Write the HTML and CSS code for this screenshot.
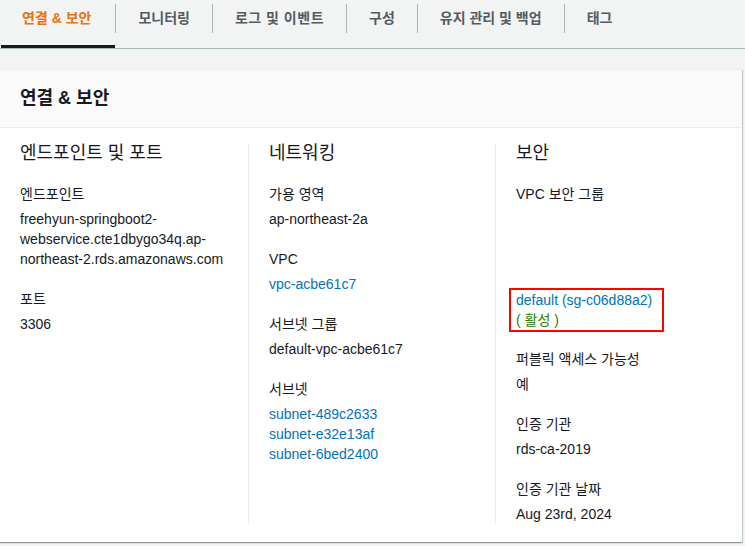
FILE: index.html
```html
<!DOCTYPE html>
<html lang="ko">
<head>
<meta charset="utf-8">
<link rel="stylesheet" href="styles.css">
</head>
<body>
<nav class="tabs">
  <div class="tab active">연결 &amp; 보안</div>
  <div class="sep"></div>
  <div class="tab">모니터링</div>
  <div class="sep"></div>
  <div class="tab wide">로그 및 이벤트</div>
  <div class="sep"></div>
  <div class="tab">구성</div>
  <div class="sep"></div>
  <div class="tab">유지 관리 및 백업</div>
  <div class="sep"></div>
  <div class="tab">태그</div>
</nav>
<section class="card">
  <header class="card-header">연결 &amp; 보안</header>
  <div class="card-body">
    <div class="col">
      <h3 class="col-title">엔드포인트 및 포트</h3>
      <div class="item">
        <div class="label">엔드포인트</div>
        <div class="value">freehyun-springboot2-<br>webservice.cte1dbygo34q.ap-<br>northeast-2.rds.amazonaws.com</div>
      </div>
      <div class="item">
        <div class="label">포트</div>
        <div class="value">3306</div>
      </div>
    </div>
    <div class="col divided">
      <h3 class="col-title">네트워킹</h3>
      <div class="item">
        <div class="label">가용 영역</div>
        <div class="value">ap-northeast-2a</div>
      </div>
      <div class="item">
        <div class="label">VPC</div>
        <div class="value link">vpc-acbe61c7</div>
      </div>
      <div class="item">
        <div class="label">서브넷 그룹</div>
        <div class="value">default-vpc-acbe61c7</div>
      </div>
      <div class="item">
        <div class="label">서브넷</div>
        <div class="value link">subnet-489c2633<br>subnet-e32e13af<br>subnet-6bed2400</div>
      </div>
    </div>
    <div class="col divided">
      <h3 class="col-title">보안</h3>
      <div class="item sg">
        <div class="label">VPC 보안 그룹</div>
        <div class="highlight">
          <div class="link">default (sg-c06d88a2)</div>
          <div class="active-state">( 활성 )</div>
        </div>
      </div>
      <div class="item">
        <div class="label">퍼블릭 액세스 가능성</div>
        <div class="value">예</div>
      </div>
      <div class="item">
        <div class="label">인증 기관</div>
        <div class="value">rds-ca-2019</div>
      </div>
      <div class="item last">
        <div class="label">인증 기관 날짜</div>
        <div class="value">Aug 23rd, 2024</div>
      </div>
    </div>
  </div>
</section>
</body>
</html>
```
FILE: styles.css
```css
html, body {
  margin: 0;
  padding: 0;
  background: #f2f3f3;
}
body {
  font-family: "Liberation Sans", "Noto Sans CJK KR", sans-serif;
  font-size: 14px;
  line-height: 20px;
  color: #16191f;
  width: 745px;
  height: 546px;
  overflow: hidden;
}
.tabs {
  display: flex;
  height: 48px;
  border-bottom: 1px solid #aab7b8;
  box-sizing: content-box;
}
.tab {
  box-sizing: border-box;
  height: 48px;
  padding: 8px 22px 0 22px;
  font-weight: 700;
  color: #545b64;
  white-space: nowrap;
}
.tab:first-child {
  margin-left: 1px;
  padding-left: 21px;
  padding-right: 24px;
}
.tab.wide {
  letter-spacing: 0.5px;
}
.tab.active {
  color: #ec7211;
  border-bottom: 3px solid #16191f;
}
.sep {
  width: 1px;
  height: 29px;
  margin-top: 4px;
  background: #aab7b8;
  flex: none;
}
.card {
  margin-top: 20px;
  width: 742px;
  background: #fff;
  border-top: 1px solid #eaeded;
  box-shadow: 0 1px 1px 0 rgba(0, 28, 36, 0.3), 1px 1px 1px 0 rgba(0, 28, 36, 0.15);
}
.card-header {
  background: #fafafa;
  border-bottom: 1px solid #eaeded;
  height: 58px;
  box-sizing: border-box;
  padding: 17px 20px 0 20px;
  font-size: 18px;
  line-height: 22px;
  font-weight: 700;
}
.card-body {
  display: grid;
  grid-template-columns: 248px 247px 1fr;
  padding: 15px 0 18px 0;
}
.col {
  padding-left: 20px;
}
.col.divided {
  border-left: 1px solid #eaeded;
}
.col-title {
  margin: 0 0 22px 0;
  padding-top: 1px;
  font-size: 18px;
  font-weight: 400;
  line-height: 18px;
}
.item {
  margin-bottom: 20px;
}
.item.last {
  margin-bottom: 0;
}
.label {
  margin-bottom: 5px;
}
.link {
  color: #0073bb;
}
.sg {
  margin-bottom: 17px;
}
.highlight {
  display: inline-block;
  margin-top: 79px;
  margin-left: -7px;
  padding: 0 10px 0 5px;
  border: 2px solid #ff0000;
}
.active-state {
  color: #1d8102;
}
```
